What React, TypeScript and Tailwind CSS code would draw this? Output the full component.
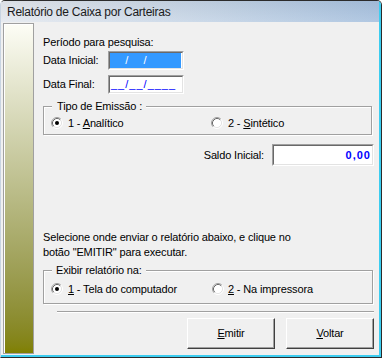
import type { ReactNode } from 'react';

const Radio = ({ checked = false }: { checked?: boolean }) => (
  <svg width="12" height="12" viewBox="0 0 12 12" className="shrink-0">
    <circle cx="6" cy="6" r="4.5" fill="#fff" />
    <path d="M2.11 9.89 A5.5 5.5 0 0 1 9.89 2.11" fill="none" stroke="#a0a0a0" />
    <path d="M9.89 2.11 A5.5 5.5 0 0 1 2.11 9.89" fill="none" stroke="#fff" />
    <path d="M2.82 9.18 A4.5 4.5 0 0 1 9.18 2.82" fill="none" stroke="#696969" />
    <path d="M9.18 2.82 A4.5 4.5 0 0 1 2.82 9.18" fill="none" stroke="#e3e3e3" />
    {checked && <circle cx="6" cy="6" r="2" fill="#000" />}
  </svg>
);

const Sunken = ({ className, children }: { className: string; children?: ReactNode }) => (
  <div className={`border border-t-[#a0a0a0] border-l-[#a0a0a0] border-b-white border-r-white ${className}`}>
    <div className="h-full w-full border border-t-[#696969] border-l-[#696969] border-b-[#e3e3e3] border-r-[#e3e3e3] bg-white">
      {children}
    </div>
  </div>
);

const Button = ({ children }: { children: ReactNode }) => (
  <button className="flex h-[31px] w-[88px] items-center justify-center border border-t-white border-l-white border-b-[#404040] border-r-[#404040] bg-[#f0f0f0] shadow-[inset_-1px_-1px_0_#a0a0a0]">
    {children}
  </button>
);

const DateMask = ({ selected = false }: { selected?: boolean }) => (
  <span className="tracking-[1px]">
    <span className={selected ? 'text-[#3399ff]' : ''}>__</span>
    <span className={selected ? 'text-white' : ''}>/</span>
    <span className={selected ? 'text-[#3399ff]' : ''}>__</span>
    <span className={selected ? 'text-white' : ''}>/</span>
    <span className={selected ? 'text-[#3399ff]' : ''}>____</span>
  </span>
);

export default function App() {
  return (
    <div className="h-[358px] w-[382px] overflow-hidden rounded-t-[5px] border border-[#2b2b2b] border-l-[#c8d4e2] bg-[#f0f0f0] font-['Liberation_Sans',Arial,sans-serif] text-[11px] leading-[13px] tracking-[-0.15px] text-black">
      <div className="flex h-full flex-col border-r-2 border-b-2 border-[#3ccdf0]">
        {/* title bar */}
        <div className="h-[21px] shrink-0 bg-[linear-gradient(to_bottom,rgba(0,0,0,0.04),rgba(255,255,255,0.12)),linear-gradient(to_right,#e4e8ee,#c3d3e5_55%,#a6c0de)] pl-[6px] pt-[2px] text-[12px] leading-[19px] tracking-[-0.25px] text-[#1a1a1a]">
          Relatório de Caixa por Carteiras
        </div>

        <div className="flex flex-1 pt-[1px] pb-[1px] pl-[2px]">
          <div className="w-[31px] shrink-0 border border-[#a0a0a0] bg-linear-to-b from-[#fdfdf6] to-[#808000] shadow-[inset_1px_1px_0_#fff]" />

          <div className="flex flex-1 flex-col pl-[9px] pr-[5px] pt-[13px]">
            <div>Período para pesquisa:</div>

            <div className="mt-[2px] flex h-[19px] items-center">
              <span className="w-[65px]">Data Inicial:</span>
              <Sunken className="h-[19px] w-[76px]">
                <div className="mr-[1px] h-full bg-[#3399ff] pl-[1px] leading-[15px] text-[#0000ff]">
                  <DateMask selected />
                </div>
              </Sunken>
            </div>

            <div className="mt-[5px] flex h-[19px] items-center">
              <span className="w-[65px]">Data Final:</span>
              <Sunken className="h-[19px] w-[76px]">
                <div className="pl-[1px] leading-[15px] text-[#0000ff]">
                  <DateMask />
                </div>
              </Sunken>
            </div>

            <fieldset className="mt-[6px] w-[329px] border border-[#a0a0a0] pl-[7px] pt-[3px] pb-[4px] shadow-[inset_1px_1px_0_#fff,1px_1px_0_#fff]">
              <legend className="ml-[1px] bg-[#f0f0f0] pl-[5px] pr-[4px] leading-[13px]">Tipo de Emissão :</legend>
              <div className="flex h-[14px] items-center">
                <label className="flex w-[160px] items-center gap-[5px]">
                  <Radio checked />
                  <span>1 - <u>A</u>nalítico</span>
                </label>
                <label className="flex items-center gap-[5px]">
                  <Radio />
                  <span>2 - <u>S</u>intético</span>
                </label>
              </div>
            </fieldset>

            <div className="mt-[9px] flex items-center justify-end gap-[8px]">
              <span>Saldo Inicial:</span>
              <Sunken className="h-[22px] w-[102px]">
                <div className="pr-[1px] text-right text-[11px] font-bold leading-[18px] tracking-[1px] text-[#0000ff]">
                  0,00
                </div>
              </Sunken>
            </div>

            <p className="mt-[64px] leading-[15px]">
              Selecione onde enviar o relatório abaixo, e clique no
              <br />
              botão &quot;EMITIR&quot; para executar.
            </p>

            <fieldset className="mt-[4px] w-[330px] border border-[#a0a0a0] pl-[7px] pt-[5px] pb-[7px] shadow-[inset_1px_1px_0_#fff,1px_1px_0_#fff]">
              <legend className="ml-[1px] bg-[#f0f0f0] pl-[4px] pr-[4px] leading-[13px]">Exibir relatório na:</legend>
              <div className="flex h-[14px] items-center">
                <label className="flex w-[161px] items-center gap-[5px]">
                  <Radio checked />
                  <span><u>1</u> - Tela do computador</span>
                </label>
                <label className="flex items-center gap-[4px]">
                  <Radio />
                  <span><u>2</u> - Na impressora</span>
                </label>
              </div>
            </fieldset>

            <div className="mt-[7px] ml-[14px] h-[2px] border-t border-b border-t-[#a0a0a0] border-b-white" />

            <div className="mt-[5px] flex justify-end gap-[11px]">
              <Button><span><u>E</u>mitir</span></Button>
              <Button><span><u>V</u>oltar</span></Button>
            </div>
          </div>
        </div>
      </div>
    </div>
  );
}
